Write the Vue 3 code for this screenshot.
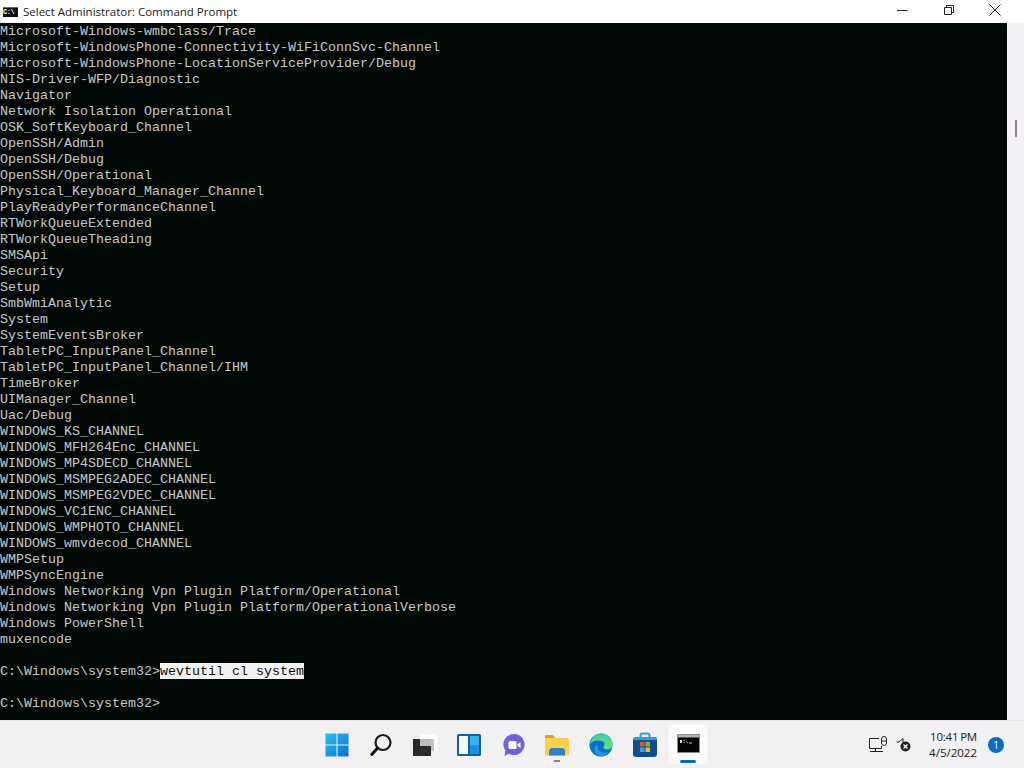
<script setup>
const lines = `Microsoft-Windows-wmbclass/Trace
Microsoft-WindowsPhone-Connectivity-WiFiConnSvc-Channel
Microsoft-WindowsPhone-LocationServiceProvider/Debug
NIS-Driver-WFP/Diagnostic
Navigator
Network Isolation Operational
OSK_SoftKeyboard_Channel
OpenSSH/Admin
OpenSSH/Debug
OpenSSH/Operational
Physical_Keyboard_Manager_Channel
PlayReadyPerformanceChannel
RTWorkQueueExtended
RTWorkQueueTheading
SMSApi
Security
Setup
SmbWmiAnalytic
System
SystemEventsBroker
TabletPC_InputPanel_Channel
TabletPC_InputPanel_Channel/IHM
TimeBroker
UIManager_Channel
Uac/Debug
WINDOWS_KS_CHANNEL
WINDOWS_MFH264Enc_CHANNEL
WINDOWS_MP4SDECD_CHANNEL
WINDOWS_MSMPEG2ADEC_CHANNEL
WINDOWS_MSMPEG2VDEC_CHANNEL
WINDOWS_VC1ENC_CHANNEL
WINDOWS_WMPHOTO_CHANNEL
WINDOWS_wmvdecod_CHANNEL
WMPSetup
WMPSyncEngine
Windows Networking Vpn Plugin Platform/Operational
Windows Networking Vpn Plugin Platform/OperationalVerbose
Windows PowerShell
muxencode`.split('\n')
</script>

<template>
  <div class="screen">
    <header class="titlebar">
      <div class="app-icon"><span>C:\</span></div>
      <span class="title">Select Administrator: Command Prompt</span>
      <div class="win-btns">
        <svg width="14" height="14" viewBox="0 0 14 14"><path d="M1 7.500H11.500" stroke="#222" stroke-width="1" fill="none"/></svg>
        <svg width="14" height="14" viewBox="0 0 14 14"><path d="M2.500 4.500h7v7h-7z M4.500 4V2.500h7v7H10" stroke="#222" stroke-width="1" fill="none"/></svg>
        <svg width="14" height="14" viewBox="0 0 14 14"><path d="M1.500 1.500l11 11M12.500 1.500l-11 11" stroke="#222" stroke-width="1" fill="none"/></svg>
      </div>
    </header>
    <main class="body">
      <div class="console">
        <div v-for="(l, i) in lines" :key="i" class="row">{{ l }}</div>
        <div class="row">&nbsp;</div>
        <div class="row">C:\Windows\system32&gt;<span class="sel">wevtutil cl system</span></div>
        <div class="row">&nbsp;</div>
        <div class="row">C:\Windows\system32&gt;</div>
      </div>
      <div class="scrollbar"><div class="thumb"></div></div>
    </main>
    <footer class="taskbar">
      <div class="apps">
        <div class="tb">
          <svg width="24" height="24" viewBox="0 0 24 24">
            <defs>
              <linearGradient id="win" x1="0" y1="0" x2="1" y2="1"><stop offset="0" stop-color="#2cc0f0"/><stop offset="1" stop-color="#0a6fd0"/></linearGradient>
            </defs>
            <path d="M.5.500h11v11H.5zM12.500.500h11v11h-11zM.5 12.500h11v11H.5zM12.500 12.500h11v11h-11z" fill="url(#win)"/>
          </svg>
        </div>
        <div class="tb">
          <svg width="24" height="24" viewBox="0 0 24 24"><circle cx="14" cy="9.500" r="7.500" fill="none" stroke="#1c1c1c" stroke-width="2.200"/><path d="M8.600 15 2.800 21.500" stroke="#111" stroke-width="3" stroke-linecap="round"/></svg>
        </div>
        <div class="tb">
          <svg width="26" height="22" viewBox="0 0 26 22"><path d="M8 0h17v17H8z" fill="#fbfbfb"/><path d="M8 5h14v12H8z" fill="#c4c4c4"/><path d="M1 5h18v17H1z" fill="#2a2a2a"/><path d="M8 5h11v7H8z" fill="#bdbdbd"/></svg>
        </div>
        <div class="tb">
          <svg width="24" height="22" viewBox="0 0 24 22"><rect width="24" height="22" rx="1.500" fill="#115ea3"/><rect x="2" y="2" width="9" height="18" fill="#f4f7fb"/><rect x="13" y="2" width="9" height="9" fill="#3bb2ee"/><rect x="13" y="11" width="9" height="9" fill="#1b8fe0"/></svg>
        </div>
        <div class="tb">
          <svg width="24" height="24" viewBox="0 0 24 24"><path d="M13 1a10.500 10.500 0 1 1-5 19.700L3.500 23l.8-5.500A10.500 10.500 0 0 1 13 1z" fill="#7160d8"/><rect x="7.500" y="8" width="8" height="8" rx="1.500" fill="#fff"/><path d="M16.500 11l3-2v6l-3-2z" fill="#fff"/></svg>
        </div>
        <div class="tb dot">
          <svg width="24" height="22" viewBox="0 0 24 22"><path d="M0 2.500A1.500 1.500 0 0 1 1.500 1H8l2.500 3H0z" fill="#d9a520"/><path d="M0 4h22.500A1.500 1.500 0 0 1 24 5.500V20a1.500 1.500 0 0 1-1.500 1.500h-21A1.500 1.500 0 0 1 0 20z" fill="#fcd04f"/><path d="M4 21.500v-4A3.500 3.500 0 0 1 7.500 14h9a3.500 3.500 0 0 1 3.500 3.500v4z" fill="#2f80c8"/></svg>
        </div>
        <div class="tb">
          <svg width="24" height="24" viewBox="0 0 24 24">
            <defs>
              <linearGradient id="edgeA" x1="0" y1="0" x2="1" y2="1"><stop offset="0" stop-color="#38c8b0"/><stop offset="1" stop-color="#5fe07a"/></linearGradient>
            </defs>
            <circle cx="12" cy="12" r="11.500" fill="#0b6fc6"/>
            <path d="M1 11C2 4.500 7 .5 12.500.5 18.500.5 23.500 5 23.500 11.500c0 3-2 5-5 5-2.500 0-4.500-1-4.500-2.500 2-1 2-3.500.5-5C12 7 7 7 4.500 8.500 3 9.300 1.800 10 1 11z" fill="url(#edgeA)"/>
            <path d="M9 12c-1 4 2 7.500 6 7.500 2 0 3.500-.5 5-1.500-2 3.500-5 5-8 5-3.500 0-6-2.500-6.500-6C5 13.500 7 11 9 12z" fill="#1a9be0"/>
          </svg>
        </div>
        <div class="tb">
          <svg width="24" height="25" viewBox="0 0 24 25"><path d="M7.500 5V3.500A2 2 0 0 1 9.500 1.500h5a2 2 0 0 1 2 2V5" stroke="#2d9fe0" stroke-width="2" fill="none"/><rect x="0" y="5" width="24" height="20" rx="3" fill="#0f4f8f"/><path d="M0 8a3 3 0 0 1 3-3h18a3 3 0 0 1 3 3z" fill="#2d9fe0"/><rect x="7" y="10" width="4.500" height="4.500" fill="#e9552f"/><rect x="12.500" y="10" width="4.500" height="4.500" fill="#7fba2a"/><rect x="7" y="15.500" width="4.500" height="4.500" fill="#2aa5ee"/><rect x="12.500" y="15.500" width="4.500" height="4.500" fill="#f5b915"/></svg>
        </div>
        <div class="tb active">
          <svg width="23" height="19" viewBox="0 0 23 19"><rect width="23" height="19" rx="1" fill="#8c8c8c"/><rect x="1" y="1" width="21" height="2.500" fill="#b5b5b5"/><rect x="1" y="3.500" width="21" height="14.500" fill="#050505"/><path d="M3 6h2v3H3zM6.500 6h1v1h-1zM6.500 8h1v1h-1zM9 6l2 3h-1zM12 8.500h3v1h-3z" fill="#d8d8d8"/></svg>
          <i></i>
        </div>
      </div>
      <div class="tray">
        <svg width="18" height="17" viewBox="0 0 18 17" fill="none" stroke="#222" stroke-width="1"><path d="M10 2.500H.5v10h12V10M1 15.500h13M6.500 12.500v3"/><rect x="12.500" y=".5" width="5" height="9" rx="2.500"/><path d="M13 5h4"/></svg>
        <svg class="vol" width="15" height="15" viewBox="0 0 15 15"><path d="M.5 5h2.500l4-3.500v7l-2-1" fill="none" stroke="#222"/><circle cx="9.500" cy="9.500" r="5" fill="#222"/><path d="M7.500 7.500l4 4M11.500 7.500l-4 4" stroke="#fff" stroke-width="1.200"/></svg>
        <div class="clock"><div class="time">10:41 PM</div><div>4/5/2022</div></div>
        <div class="badge">1</div>
      </div>
    </footer>
  </div>
</template>

<style scoped>
.screen { width: 1024px; height: 768px; display: flex; flex-direction: column; overflow: hidden; background: #fff; }
.titlebar { height: 23px; display: flex; align-items: center; background: #fff; flex: none; }
.app-icon { width: 15px; height: 10px; margin-left: 3px; background: #111; border-top: 1px solid #666; box-sizing: border-box; display: flex; align-items: center; overflow: hidden; }
.app-icon span { color: #fff; font: bold 7px/8px "Liberation Mono", monospace; letter-spacing: -.5px; }
.title { margin-left: 5px; font: 11.5px/16px "Open Sans", "Noto Sans", sans-serif; color: #1a1a1a; white-space: nowrap; }
.win-btns { margin-left: auto; display: flex; gap: 32px; margin-right: 22px; padding-bottom: 3px; }
.body { flex: 1; display: flex; min-height: 0; }
.console { flex: 1; background: #020805; color: #c8c8c8; font: 13.33px/18px "Liberation Mono", "DejaVu Sans Mono", monospace; overflow: hidden; white-space: pre; }
.row { height: 16px; }
.sel { display: inline-block; height: 16px; vertical-align: top; background: #f2f2f2; color: #0c0c0c; }
.scrollbar { width: 17px; background: #f3f0f5; display: flex; justify-content: center; padding-top: 97px; box-sizing: border-box; }
.thumb { width: 2px; height: 17px; background: #8a868c; }
.taskbar { height: 48px; flex: none; background: #f3f0f4; border-top: 1px solid #e8e5e9; box-sizing: border-box; display: flex; position: relative; }
.apps { position: absolute; left: 315px; top: 0; height: 47px; display: flex; }
.tb { width: 44px; height: 47px; display: flex; align-items: center; justify-content: center; position: relative; }
.tb.dot::after { content: ""; position: absolute; bottom: 6px; left: 19px; width: 6px; height: 2px; background: #85838a; }
.tb.active { width: 38px; height: 38px; margin: 4px 0 0 2px; background: #fbf9fb; border-radius: 4px; box-shadow: 0 0 0 1px #f7f5f8; padding-bottom: 1px; box-sizing: border-box; }
.tb.active i { position: absolute; left: 11px; bottom: 0; width: 16px; height: 3px; border-radius: 2px; background: #0a67c0; }
.tray { margin-left: auto; display: flex; align-items: center; }
.tray svg { display: block; }
.vol { margin-left: 9px; }
.clock { margin-left: 18px; width: 48px; text-align: right; font: 11.5px/16px "Open Sans", "Noto Sans", sans-serif; color: #1a1a1a; white-space: nowrap; }
.time { word-spacing: -1px; letter-spacing: -.2px; }
.badge { width: 16px; height: 16px; margin: 0 20px 0 11px; border-radius: 50%; background: #0b6cc4; color: #fff; font: 10px/16px "Open Sans", sans-serif; text-align: center; }
</style>
